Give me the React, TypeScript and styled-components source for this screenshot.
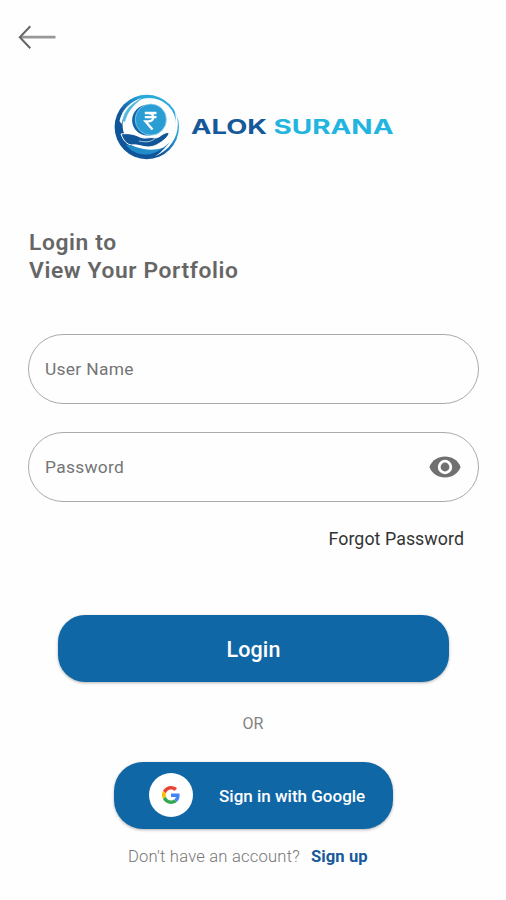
import React from "react";
import styled, { createGlobalStyle } from "styled-components";

const GlobalStyle = createGlobalStyle`
  * { box-sizing: border-box; }
  body { margin: 0; background: #fefefe; font-family: Roboto, "Liberation Sans", sans-serif; }
  button, input { font-family: inherit; }
`;

const Screen = styled.main`
  display: flex;
  flex-direction: column;
  width: 506px;
  height: 900px;
  padding: 24px 28px 0;
  overflow: hidden;
`;

const BackButton = styled.button`
  display: flex;
  width: 40px;
  height: 26px;
  margin-left: -11px;
  padding: 0;
  border: 0;
  background: none;
`;

const Brand = styled.header`
  display: flex;
  align-items: center;
  gap: 10px;
  height: 66px;
  margin: 44px 0 0 86px;
`;

const Wordmark = styled.svg`
  display: block;
  font-family: Inter, sans-serif;
  font-size: 19.8px;
  font-weight: 700;
`;

const Heading = styled.h1`
  margin: 69px 0 0 1px;
  color: #666;
  font-size: 22.8px;
  font-weight: 600;
  line-height: 28px;
  letter-spacing: 0.62px;
`;

const Form = styled.form`
  display: flex;
  flex-direction: column;
  margin-top: 49px;
`;

const Field = styled.label`
  display: flex;
  align-items: center;
  width: 451px;
  height: 70px;
  padding: 0 17px 0 16px;
  border: 1.5px solid #aaa;
  border-radius: 36px;

  & + & { margin-top: 28px; }
`;

const Input = styled.input`
  flex: 1;
  min-width: 0;
  padding: 0;
  border: 0;
  outline: 0;
  background: none;
  font-size: 17.4px;
  letter-spacing: 0.3px;

  &::placeholder { color: #757575; opacity: 1; }
`;

const ForgotLink = styled.a`
  align-self: flex-end;
  margin: 26px 14px 0 0;
  color: #333;
  font-size: 17.8px;
  line-height: 22px;
  letter-spacing: 0.06px;
`;

const PrimaryButton = styled.button<{ $wide?: boolean }>`
  display: flex;
  align-items: center;
  justify-content: ${(p) => (p.$wide ? "center" : "flex-start")};
  align-self: center;
  width: ${(p) => (p.$wide ? 391 : 279)}px;
  height: 67px;
  margin-left: 1px;
  padding: ${(p) => (p.$wide ? "2px 0 0" : "0 0 0 35px")};
  border: 0;
  border-radius: ${(p) => (p.$wide ? 27 : 29)}px;
  background: #1067a6;
  box-shadow: 0 1px 3px rgba(0, 0, 0, 0.3);
  color: #fff;
  font-size: ${(p) => (p.$wide ? 21.5 : 17)}px;
  font-weight: 500;
  letter-spacing: ${(p) => (p.$wide ? 0.15 : 0)}px;
  white-space: nowrap;
`;

const LoginButton = styled(PrimaryButton)`
  margin-top: 65px;
`;

const Divider = styled.div`
  margin: 31px 0 28px;
  color: #828282;
  font-size: 16px;
  line-height: 21px;
  text-align: center;
`;

const GoogleBadge = styled.span`
  display: flex;
  align-items: center;
  justify-content: center;
  width: 44px;
  height: 44px;
  margin: 0 26px 2px 0;
  border-radius: 50%;
  background: #fff;
`;

const SignupRow = styled.p`
  display: flex;
  gap: 11px;
  margin: 17px 0 0 100px;
  color: #777;
  font-size: 16.6px;
  font-weight: 300;
  line-height: 22px;
  letter-spacing: 0.2px;
  white-space: nowrap;
`;

const SignupLink = styled.a`
  color: #17599b;
  font-weight: 700;
  letter-spacing: 0.1px;
`;

const ArrowIcon = () => (
  <svg width="40" height="26" viewBox="17 24 40 26" fill="none">
    <path d="M21 37.2H55.5" stroke="#979797" strokeWidth="2.7" />
    <path d="M30.3 26.3L19.8 37.2L30.3 48.2" stroke="#666" strokeWidth="2" />
  </svg>
);

const LogoMark = () => (
  <svg width="66" height="66" viewBox="114 94 66 66">
    <defs>
      <linearGradient id="ring" x1="0" y1="1" x2="1" y2="0">
        <stop offset="0.4" stopColor="#10549a" />
        <stop offset="0.7" stopColor="#2aaadc" />
      </linearGradient>
    </defs>
    <circle cx="146.8" cy="127" r="32.2" fill="url(#ring)" />
    <circle cx="149.3" cy="124.8" r="26.8" fill="#fefefe" />
    <path d="M119.5 121C122 109 131 101 142 98C132 103 124 112 121.5 124Z" fill="#fefefe" />
    <path d="M174 107C183 127 176 147 155 156.5C174 143 179 127 174 107Z" fill="#fefefe" />
    <path d="M122.5 121C124 110 132 102 142 99C133 105 127 113 125 122Z" fill="#55badf" />
    <circle cx="147.3" cy="120.2" r="15.2" fill="#1266a8" />
    <circle cx="150.8" cy="119.6" r="15.6" fill="#2b9dd5" stroke="#9bd7ef" strokeWidth="0.7" />
    <path d="M121 134C128 133 134 134 140 137C145 139.5 150 136.5 155 138C160 138 163 132 169 132.5C170 136 160 144 154 146C145 149 140 144 132 145C127 145 123 140 121 134Z" fill="#12569a" stroke="#fefefe" strokeWidth="1" />
    <path d="M139 141C146 142.5 151 142 155 138.5" fill="none" stroke="#cce5f2" strokeWidth="0.8" />
    <path d="M126 144.5C136 145.5 145 153 163 148C149 159 133 155 126 144.5Z" fill="#208dc9" />
    <path d="M144.8 113H156.5M144.8 117.2H156.5M145.2 113H148.2C155 113 155 121.4 148.2 121.4H145.5L152.5 129.4" fill="none" stroke="#fff" strokeWidth="2.3" />
  </svg>
);

const EyeIcon = () => (
  <svg width="32" height="22" viewBox="0 0 32 22">
    <path d="M.4 11C3 4.2 9 .6 16 .6S29 4.2 31.6 11C29 17.8 23 21.4 16 21.4S3 17.8.4 11Z" fill="#707070" />
    <circle cx="16" cy="11" r="5.8" fill="#707070" stroke="#fff" strokeWidth="2.8" />
  </svg>
);

const GoogleIcon = () => (
  <svg width="18" height="18" viewBox="0 0 48 48">
    <path fill="#EA4335" d="M24 9.5c3.54 0 6.71 1.22 9.21 3.6l6.85-6.85C35.9 2.38 30.47 0 24 0 14.62 0 6.51 5.38 2.56 13.22l7.98 6.19C12.43 13.72 17.74 9.5 24 9.5z" />
    <path fill="#4285F4" d="M46.98 24.55c0-1.57-.15-3.09-.38-4.55H24v9.02h12.94c-.58 2.96-2.26 5.48-4.78 7.18l7.73 6c4.51-4.18 7.09-10.36 7.09-17.65z" />
    <path fill="#FBBC05" d="M10.53 28.59c-.48-1.45-.76-2.99-.76-4.59s.27-3.14.76-4.59l-7.98-6.19C.92 16.46 0 20.12 0 24c0 3.88.92 7.54 2.56 10.78l7.97-6.19z" />
    <path fill="#34A853" d="M24 48c6.48 0 11.93-2.13 15.89-5.81l-7.73-6c-2.15 1.45-4.92 2.3-8.16 2.3-6.26 0-11.57-4.22-13.47-9.91l-7.98 6.19C6.51 42.62 14.62 48 24 48z" />
  </svg>
);

export default function App() {
  return (
    <>
      <GlobalStyle />
      <Screen>
        <BackButton aria-label="Back"><ArrowIcon /></BackButton>
        <Brand>
          <LogoMark />
          <Wordmark width="206" height="24" viewBox="0 0 206 24">
            <text x="1" y="18.5" fill="#15599a" textLength="76" lengthAdjust="spacingAndGlyphs">ALOK</text>
            <text x="83.5" y="18.5" fill="#22b5df" textLength="120" lengthAdjust="spacingAndGlyphs">SURANA</text>
          </Wordmark>
        </Brand>
        <Heading>Login to<br />View Your Portfolio</Heading>
        <Form onSubmit={(e) => e.preventDefault()}>
          <Field><Input placeholder="User Name" /></Field>
          <Field><Input type="password" placeholder="Password" /><EyeIcon /></Field>
          <ForgotLink>Forgot Password</ForgotLink>
          <LoginButton $wide>Login</LoginButton>
        </Form>
        <Divider>OR</Divider>
        <PrimaryButton>
          <GoogleBadge><GoogleIcon /></GoogleBadge>
          Sign in with Google
        </PrimaryButton>
        <SignupRow>Don't have an account? <SignupLink>Sign up</SignupLink></SignupRow>
      </Screen>
    </>
  );
}
